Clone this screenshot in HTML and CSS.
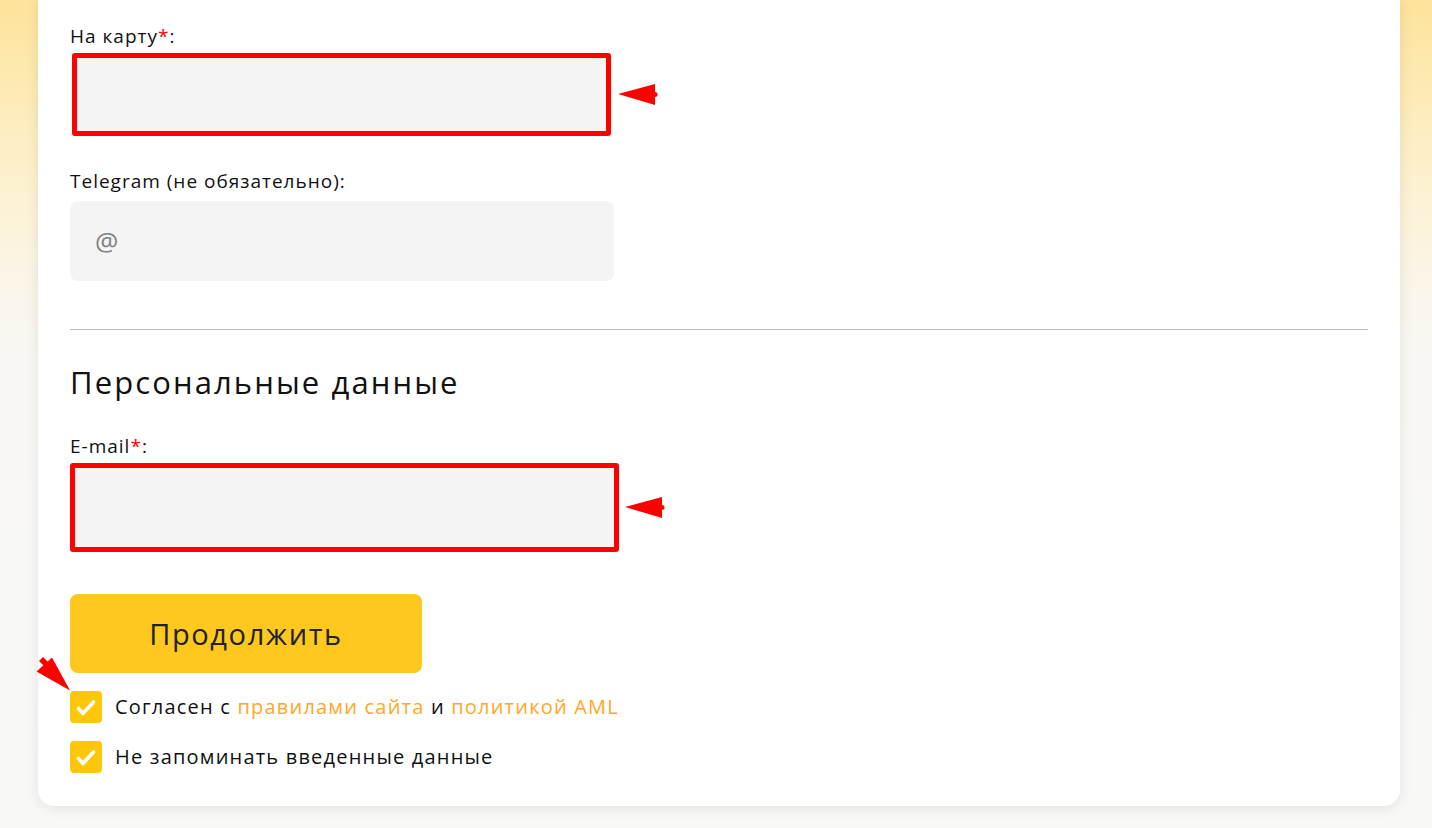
FILE: index.html
```html
<!DOCTYPE html>
<html lang="ru">
<head>
<meta charset="utf-8">
<title>Форма</title>
<link rel="stylesheet" href="styles.css">
</head>
<body>
<div class="page">
  <div class="card">
    <div class="label label-first">На карту<span class="req">*</span>:</div>
    <div class="input-row row-card">
      <div class="input input-error input-card"></div>
      <svg class="arrow-left" width="40" height="22" viewBox="0 0 40 22"><polygon points="0,10 37,0 37,21" fill="#ff0000"/><circle cx="37" cy="10.5" r="2.5" fill="#ff0000"/></svg>
    </div>

    <div class="label label-tg">Telegram (не обязательно):</div>
    <div class="input input-tg"><span class="at">@</span></div>

    <hr class="divider">

    <h2 class="heading">Персональные данные</h2>

    <div class="label label-mail">E-mail<span class="req">*</span>:</div>
    <div class="input-row row-mail">
      <div class="input input-error input-mail"></div>
      <svg class="arrow-left" width="40" height="22" viewBox="0 0 40 22"><polygon points="0,10 37,0 37,21" fill="#ff0000"/><circle cx="37" cy="10.5" r="2.5" fill="#ff0000"/></svg>
    </div>

    <button class="btn">Продолжить</button>

    <div class="check-row check-first">
      <span class="box">
        <svg width="32" height="32" viewBox="0 0 32 32"><path d="M8.5 17.5 L13 22.5 L23.5 11" fill="none" stroke="#fff" stroke-width="3.6" stroke-linecap="round" stroke-linejoin="round"/></svg>
        <svg class="arrow-diag" width="36" height="40" viewBox="0 0 36 40"><polygon points="0.5,16.5 16,2.5 34,35.5" fill="#ff0000"/><polygon points="3,6 7,2 12,7 8,11" fill="#ff0000"/></svg>
      </span>
      <span class="check-text">Согласен с <a class="link" href="#">правилами сайта</a> и <a class="link" href="#">политикой AML</a></span>
    </div>
    <div class="check-row check-second">
      <span class="box">
        <svg width="32" height="32" viewBox="0 0 32 32"><path d="M8.5 17.5 L13 22.5 L23.5 11" fill="none" stroke="#fff" stroke-width="3.6" stroke-linecap="round" stroke-linejoin="round"/></svg>
      </span>
      <span class="check-text">Не запоминать введенные данные</span>
    </div>
  </div>
</div>
</body>
</html>
```
FILE: styles.css
```css
* { box-sizing: border-box; }
html, body { margin: 0; padding: 0; }
body {
  font-family: "Open Sans", "Noto Sans", sans-serif;
  color: #111;
  background: linear-gradient(180deg, #fde39a 0px, #fdeab5 90px, #fcf1d2 190px, #faf5e8 280px, #f8f7f4 360px, #f8f8f7 828px);
  min-height: 828px;
}
.page {
  padding: 0 32px 22px 38px;
}
.card {
  width: 1362px;
  background: #fff;
  border-radius: 0 0 16px 16px;
  box-shadow: 0 2px 14px rgba(0, 0, 0, 0.09);
  padding: 25px 32px 33px 32px;
  display: flex;
  flex-direction: column;
  align-items: flex-start;
}
.label {
  font-size: 19px;
  line-height: 22px;
  letter-spacing: 1px;
  color: #111;
}
.req { color: #ff0000; }
.label-tg { margin-top: 34px; }
.label-mail { margin-top: 36px; }
.input-row {
  display: flex;
  align-items: center;
}
.row-card { margin-top: 6px; gap: 7px; }
.row-mail { margin-top: 6px; gap: 6px; }
.input {
  background: #f4f4f4;
}
.input-error {
  border: 5px solid #ff0000;
  border-radius: 3px;
}
.input-card {
  margin-left: 2px;
  width: 539px;
  height: 83px;
}
.input-mail {
  width: 549px;
  height: 89px;
}
.arrow-left { display: block; }
.input-tg {
  margin-top: 9px;
  width: 544px;
  height: 80px;
  border-radius: 8px;
  display: flex;
  align-items: center;
  padding-left: 25px;
}
.at {
  font-size: 26px;
  color: #808080;
}
.divider {
  margin: 48px 0 0 0;
  width: 1298px;
  height: 1px;
  border: 0;
  background: #bdbdbd;
}
.heading {
  margin: 35px 0 0 0;
  font-size: 31px;
  line-height: 34px;
  font-weight: 500;
  letter-spacing: 2.1px;
  color: #111;
}
.btn {
  margin-top: 42px;
  width: 352px;
  height: 79px;
  border: 0;
  border-radius: 8px;
  background: #fec81f;
  color: #222;
  font-family: inherit;
  font-size: 29px;
  font-weight: 500;
  letter-spacing: 1.6px;
  padding: 0;
}
.check-row {
  display: flex;
  align-items: center;
  gap: 13px;
}
.check-first { margin-top: 18px; }
.check-second { margin-top: 18px; }
.box {
  position: relative;
  width: 32px;
  height: 32px;
  border-radius: 4px;
  background: #ffc70a;
  flex: none;
}
.box svg { display: block; }
.arrow-diag {
  position: absolute;
  left: -34px;
  top: -36px;
}
.check-text {
  font-size: 20px;
  line-height: 22px;
  letter-spacing: 1.2px;
  color: #111;
}
.link {
  color: #ffa726;
  text-decoration: none;
}
```
